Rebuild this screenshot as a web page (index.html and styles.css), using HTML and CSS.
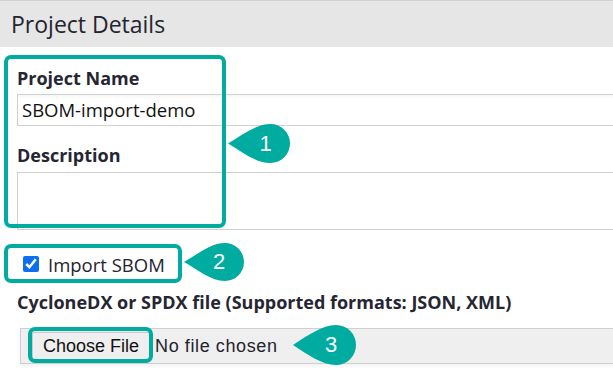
FILE: index.html
```html
<!DOCTYPE html>
<html>
<head>
<meta charset="utf-8">
<link rel="stylesheet" href="styles.css">
</head>
<body>
<div class="page">
  <div class="header">Project Details</div>
  <div class="form">
    <label class="label first">Project Name</label>
    <div class="input">SBOM-import-demo</div>
    <label class="label desc">Description</label>
    <div class="textarea"></div>
    <div class="check-row">
      <input type="checkbox" class="check" checked>
      <span class="check-label">Import SBOM</span>
    </div>
    <label class="label file-label">CycloneDX or SPDX file (Supported formats: JSON, XML)</label>
    <div class="file-row">
      <button class="file-btn">Choose File</button>
      <span class="file-name">No file chosen</span>
    </div>
  </div>

  <div class="mark box1"></div>
  <div class="mark box2"></div>
  <div class="mark box3"></div>

  <div class="bubble b1">
    <svg width="62" height="39" viewBox="0 0 62 39"><path d="M0 19.5 C14 11 28 0 42.5 0 A19.5 19.5 0 0 1 42.5 39 C28 39 14 28 0 19.5 Z" fill="#00ab9f"/></svg>
    <span class="num">1</span>
  </div>
  <div class="bubble b2">
    <svg width="60" height="38" viewBox="0 0 60 38"><path d="M0 19 C14 11 27 0 41 0 A19 19 0 0 1 41 38 C27 38 14 27 0 19 Z" fill="#00ab9f"/></svg>
    <span class="num">2</span>
  </div>
  <div class="bubble b3">
    <svg width="63" height="40" viewBox="0 0 63 40"><path d="M0 20 C14 11 29 0 43 0 A20 20 0 0 1 43 40 C29 40 14 29 0 20 Z" fill="#00ab9f"/></svg>
    <span class="num">3</span>
  </div>
</div>
</body>
</html>
```

FILE: styles.css
```css
html, body {
  margin: 0;
  padding: 0;
  background: #fff;
}
.page {
  position: relative;
  width: 613px;
  height: 392px;
  overflow: hidden;
  font-family: "Open Sans", sans-serif;
  color: #262633;
}
.header {
  height: 46px;
  border-top: 1px solid #d2d2d2;
  background: #e6e6e6;
  padding-left: 11px;
  font-size: 23px;
  line-height: 46px;
  color: #24242e;
}
.form {
  padding-left: 17px;
  display: flex;
  flex-direction: column;
}
.label {
  display: block;
  font-weight: 700;
  font-size: 18px;
  line-height: 24px;
  color: #262633;
}
.label.first { margin-top: 19px; }
.label.desc { margin-top: 17px; }
.label.file-label { margin-top: 7px; }
.input {
  margin-top: 4px;
  width: 620px;
  height: 30px;
  border: 1px solid #d0d0d0;
  box-shadow: inset 0 2px 3px rgba(0,0,0,0.04);
  padding-left: 4px;
  font-size: 18.5px;
  line-height: 30px;
  color: #111;
}
.textarea {
  margin-top: 5px;
  width: 620px;
  height: 56px;
  border: 1px solid #d0d0d0;
}
.check-row {
  display: flex;
  align-items: center;
  height: 38px;
  margin-top: 15px;
}
.check {
  width: 16px;
  height: 16px;
  margin: 0 9px 0 6px;
  accent-color: #0b6ff0;
}
.check-label {
  font-size: 18.5px;
  color: #24242e;
}
.file-row {
  margin-top: 14px;
  margin-left: 3px;
  width: 620px;
  height: 34px;
  border: 1px solid #cfcfcf;
  background: #efefef;
  display: flex;
  align-items: center;
  box-shadow: 0 2px 4px rgba(0,0,0,0.06);
}
.file-btn {
  margin-left: 11px;
  height: 28px;
  padding: 0 10px;
  border: 1px solid #c9c9c9;
  border-radius: 2px;
  background: #efefef;
  font-family: "Liberation Sans", Arial, sans-serif;
  font-size: 18px;
  color: #111;
}
.file-name {
  margin-left: 5px;
  font-family: "Liberation Sans", Arial, sans-serif;
  font-size: 18px;
  letter-spacing: 0.6px;
  color: #23232e;
}
.mark {
  position: absolute;
  box-sizing: border-box;
  border: 4px solid #00ab9f;
  border-radius: 7px;
}
.box1 { left: 4px; top: 55px; width: 222px; height: 173px; }
.box2 { left: 4px; top: 244px; width: 178px; height: 39px; }
.box3 { left: 28px; top: 327px; width: 125px; height: 36px; }
.bubble {
  position: absolute;
}
.bubble svg { display: block; }
.num {
  position: absolute;
  top: 0;
  bottom: 0;
  display: flex;
  align-items: center;
  justify-content: center;
  color: #fff;
  font-family: "Liberation Sans", Arial, sans-serif;
  font-size: 22px;
}
.b1 { left: 228px; top: 124px; }
.b1 .num { left: 18px; width: 39px; }
.b2 { left: 184px; top: 243px; }
.b2 .num { left: 16px; width: 38px; }
.b3 { left: 293px; top: 325px; }
.b3 .num { left: 18px; width: 40px; }
```
